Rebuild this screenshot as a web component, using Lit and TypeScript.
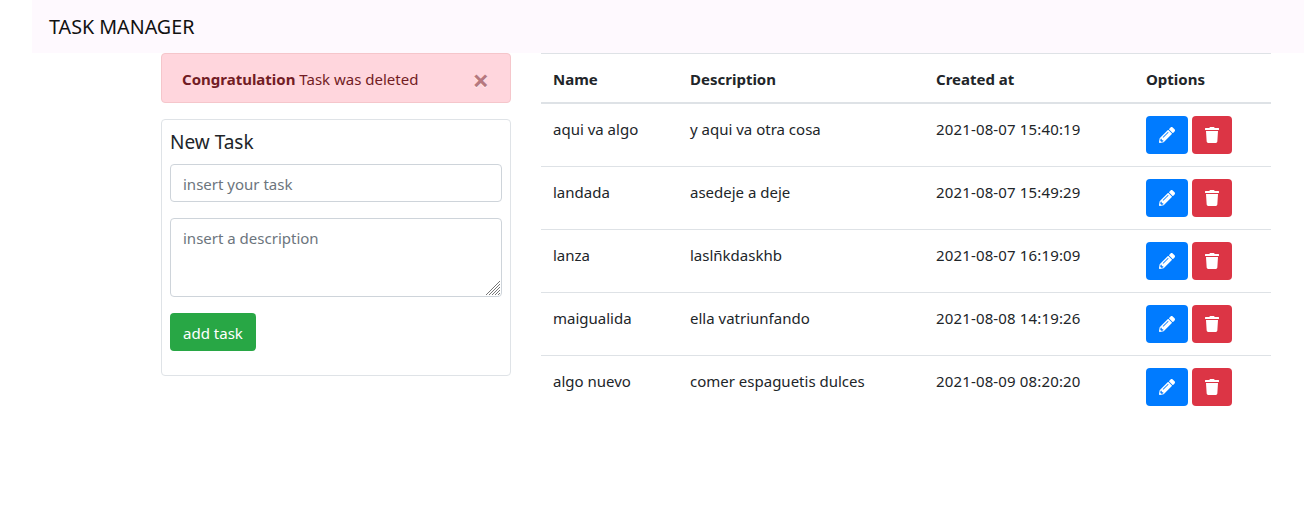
import { LitElement, html, css } from 'lit';
import { customElement } from 'lit/decorators.js';

interface Task {
  name: string;
  description: string;
  createdAt: string;
}

const TASKS: Task[] = [
  { name: 'aqui va algo', description: 'y aqui va otra cosa', createdAt: '2021-08-07 15:40:19' },
  { name: 'landada', description: 'asedeje a deje', createdAt: '2021-08-07 15:49:29' },
  { name: 'lanza', description: 'laslñkdaskhb', createdAt: '2021-08-07 16:19:09' },
  { name: 'maigualida', description: 'ella vatriunfando', createdAt: '2021-08-08 14:19:26' },
  { name: 'algo nuevo', description: 'comer espaguetis dulces', createdAt: '2021-08-09 08:20:20' },
];

const PENCIL = html`<svg class="icon" viewBox="0 0 512 512"><path fill="currentColor" d="M497.9 142.1l-46.1 46.1c-4.7 4.7-12.3 4.7-17 0l-111-111c-4.7-4.7-4.7-12.3 0-17l46.1-46.1c18.7-18.7 49.1-18.7 67.9 0l60.1 60.1c18.8 18.7 18.8 49.1 0 67.9zM284.2 99.8L21.6 362.4.4 483.9c-2.9 16.4 11.4 30.6 27.8 27.7l121.5-21.3 262.6-262.6c4.7-4.7 4.7-12.3 0-17l-111-111c-4.8-4.7-12.4-4.7-17.1 0zM124.1 339.9c-5.5-5.5-5.5-14.3 0-19.8l154-154c5.5-5.5 14.3-5.5 19.8 0s5.5 14.3 0 19.8l-154 154c-5.5 5.5-14.3 5.5-19.8 0zM88 424h48v36.3l-64.5 11.3-31.1-31.1L51.7 376H88v48z"/></svg>`;
const TRASH = html`<svg class="icon" viewBox="0 0 448 512"><path fill="currentColor" d="M432 32H312l-9.4-18.7A24 24 0 0 0 281.1 0H166.8a23.72 23.72 0 0 0-21.4 13.3L136 32H16A16 16 0 0 0 0 48v32a16 16 0 0 0 16 16h416a16 16 0 0 0 16-16V48a16 16 0 0 0-16-16zM53.2 467a48 48 0 0 0 47.9 45h245.8a48 48 0 0 0 47.9-45L416 128H32z"/></svg>`;
// textarea resize grip
const GRIP = html`<svg class="grip" viewBox="0 0 14 14"><path fill="none" stroke="#777" stroke-width="1" d="M0 14L14 0M3 14L14 3M6 14L14 6M9 14L14 9M12 14L14 12"/></svg>`;

@customElement('app-root')
export class AppRoot extends LitElement {
  static styles = css`
    :host {
      display: block;
      font-family: 'Noto Sans', 'Open Sans', sans-serif;
      font-size: 15px;
      line-height: 24px;
      color: #212529;
      background: #fff;
      min-height: 525px;
    }
    * { box-sizing: border-box; }
    .navbar {
      margin-left: 32px;
      height: 53px;
      padding: 15px 17px 0;
      background: #fef9fe;
      color: #111;
      font-size: 19.7px;
      line-height: 24px;
    }
    .content {
      display: flex;
      align-items: flex-start;
      gap: 30px;
      padding: 0 33px 0 161px;
    }
    .side { width: 350px; flex: none; }
    .alert {
      display: flex;
      align-items: center;
      justify-content: space-between;
      height: 50px;
      padding: 2px 21px 0 20px;
      margin-bottom: 16px;
      background: #ffd6dd;
      border: 1px solid #f5c6cb;
      border-radius: 4px;
      color: #721c24;
    }
    .close {
      font-size: 29px;
      font-weight: 700;
      color: #721c24;
      opacity: 0.5;
      line-height: 1;
      text-shadow: 0 1px 0 #fff;
    }
    .card {
      height: 257px;
      padding: 8px;
      border: 1px solid #dfe3e7;
      border-radius: 4px;
    }
    h4 { margin: 0; font-size: 19px; font-weight: 400; line-height: 28px; height: 36px; }
    input, textarea {
      display: block;
      width: 100%;
      font: inherit;
      padding: 7px 12px 5px;
      border: 1px solid #ced4da;
      border-radius: 4px;
      color: #495057;
      background: #fff;
    }
    input { height: 38px; margin-bottom: 16px; }
    .area { position: relative; height: 79px; margin-bottom: 16px; }
    textarea { height: 100%; resize: none; }
    .grip { position: absolute; right: 2px; bottom: 2px; width: 14px; height: 14px; pointer-events: none; }
    ::placeholder { color: #6c757d; opacity: 1; }
    .add {
      display: block;
      width: 86px;
      height: 38px;
      border: 0;
      border-radius: 4px;
      background: #28a745;
      color: #fff;
      font: inherit;
      padding: 2px 0 0;
    }
    table {
      width: 730px;
      table-layout: fixed;
      border-collapse: collapse;
      flex: none;
    }
    th {
      height: 49px;
      padding: 3px 12px 0;
      text-align: left;
      font-weight: 700;
      border-top: 1px solid #dee2e6;
      border-bottom: 2px solid #dee2e6;
    }
    td {
      height: 63px;
      padding: 13px 12px 12px;
      vertical-align: top;
      border-top: 1px solid #dee2e6;
    }
    td.opts { padding-top: 12px; }
    tr:first-child td { border-top: 0; }
    .date { letter-spacing: 0.15px; }
    .actions { display: flex; gap: 4px; }
    .btn {
      display: flex;
      align-items: center;
      justify-content: center;
      height: 38px;
      border: 0;
      border-radius: 4px;
      color: #fff;
      padding: 0;
    }
    .edit { width: 42px; background: #007bff; }
    .del { width: 40px; background: #dc3545; }
    .icon { width: 16px; height: 16px; display: block; }
  `;

  render() {
    return html`
      <div class="navbar">TASK MANAGER</div>
      <div class="content">
        <div class="side">
          <div class="alert">
            <span><strong>Congratulation</strong> Task was deleted</span>
            <span class="close">×</span>
          </div>
          <div class="card">
            <h4>New Task</h4>
            <input type="text" placeholder="insert your task" />
            <div class="area">
              <textarea placeholder="insert a description"></textarea>
              ${GRIP}
            </div>
            <button class="add">add task</button>
          </div>
        </div>
        <table>
          <colgroup>
            <col style="width:137px" /><col style="width:246px" /><col style="width:210px" /><col style="width:137px" />
          </colgroup>
          <thead>
            <tr><th>Name</th><th>Description</th><th>Created at</th><th>Options</th></tr>
          </thead>
          <tbody>
            ${TASKS.map(
              t => html`
                <tr>
                  <td>${t.name}</td>
                  <td>${t.description}</td>
                  <td class="date">${t.createdAt}</td>
                  <td class="opts">
                    <div class="actions">
                      <button class="btn edit">${PENCIL}</button>
                      <button class="btn del">${TRASH}</button>
                    </div>
                  </td>
                </tr>
              `
            )}
          </tbody>
        </table>
      </div>
    `;
  }
}
